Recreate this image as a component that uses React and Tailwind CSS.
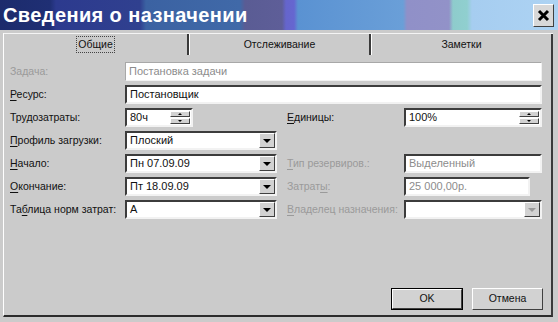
import React from 'react';

const sunken = 'border-2 border-t-[#3c3c3c] border-l-[#3c3c3c] border-b-[#f2f2f2] border-r-[#f2f2f2]';
const raised = 'border border-t-[#ffffff] border-l-[#ffffff] border-b-[#404040] border-r-[#404040] bg-[#d2d2d2]';

function Label({ children, disabled, w = 'w-[115px]' }) {
  return (
    <div className={`${w} shrink-0 text-[10.5px] ${disabled ? 'text-[#9a9a9a]' : 'text-[#111]'}`}>
      {children}
    </div>
  );
}

function U({ children }) {
  return <span className="underline underline-offset-2">{children}</span>;
}

function Input({ w, value, disabled, soft, spin, select }) {
  return (
    <div
      className={`${w} h-[19px] flex items-stretch bg-white ${
        soft ? 'border border-[#a8a8a8] border-b-[#f0f0f0] border-r-[#f0f0f0]' : sunken
      }`}
    >
      <div className={`flex-1 flex items-center pl-[3px] text-[11px] ${disabled ? 'text-[#8c8c8c]' : 'text-[#111]'}`}>
        {value}
      </div>
      {spin && (
        <div className="w-[21px] flex flex-col gap-px py-px pr-px">
          <div className={`${raised} flex-1 flex items-center justify-center`}>
            <div className="w-0 h-0 border-x-[2px] border-x-transparent border-b-[2px] border-b-black" />
          </div>
          <div className={`${raised} flex-1 flex items-center justify-center`}>
            <div className="w-0 h-0 border-x-[2px] border-x-transparent border-t-[2px] border-t-black" />
          </div>
        </div>
      )}
      {select && (
        <div className={`${raised} w-[16px] flex items-center justify-center`}>
          <div
            className={`w-0 h-0 border-x-[4px] border-x-transparent border-t-[4px] ${
              disabled ? 'border-t-[#9a9a9a]' : 'border-t-black'
            }`}
          />
        </div>
      )}
    </div>
  );
}

function Row({ children }) {
  return <div className="flex items-center h-[19px]">{children}</div>;
}

export default function App() {
  return (
    <div
      className="w-[558px] h-[322px] bg-[#cbcbcb] flex flex-col overflow-hidden"
      style={{ fontFamily: '"Liberation Sans", Arial, sans-serif' }}
    >
      <div className="h-[30px] shrink-0 flex items-center pl-[3px] pr-[4px] bg-[linear-gradient(90deg,#1c2b6c_0px,#1f2f74_50px,#2c3a8e_56px,#30408f_140px,#3b62a2_146px,#4069a8_240px,#5a5c94_245px,#5e5e98_282px,#6565cc_286px,#6666d0_294px,#5a92d2_298px,#6a9fd8_403px,#9090c8_407px,#9292c8_449px,#8ecccc_453px,#90cfcf_467px,#a6cdf0_472px,#add3f3_100%)]">
        <div className="text-[20px] font-bold text-white leading-none tracking-[0.4px]">Сведения о назначении</div>
        <div className={`ml-auto w-[21px] h-[23px] flex items-center justify-center ${raised} bg-[#d8d8d8]`}>
          <svg width="13" height="13" viewBox="0 0 13 13">
            <path d="M2 2 L11 11 M11 2 L2 11" stroke="#000" strokeWidth="3" />
          </svg>
        </div>
      </div>

      <div className="flex-1 flex flex-col px-[3px] pt-[3px] pb-[5px]">
        <div className="h-[22px] flex shrink-0 border-t border-t-[#f4f4f4] border-l border-l-white w-[550px]">
          <div className="w-[185px] flex items-center justify-center border-r-2 border-r-[#3a3a3a]">
            <span className="text-[10.5px] text-[#111] px-px border border-dotted border-[#444]">Общие</span>
          </div>
          <div className="w-[182px] flex items-center justify-center border-r-2 border-r-[#3a3a3a] border-l border-l-white">
            <span className="text-[10.5px] text-[#111]">Отслеживание</span>
          </div>
          <div className="flex-1 flex items-center justify-center border-r-2 border-r-[#3a3a3a] border-l border-l-white">
            <span className="text-[10.5px] text-[#111]">Заметки</span>
          </div>
        </div>

        <div className="flex-1 w-[550px] flex flex-col border-l border-l-white border-r-2 border-r-[#3a3a3a] border-b-2 border-b-[#2c2c2c] pl-[6px] pt-[7px] pb-[5px] gap-[4px]">
          <Row>
            <Label disabled>Задача:</Label>
            <Input w="w-[417px]" value="Постановка задачи" disabled soft />
          </Row>
          <Row>
            <Label><U>Р</U>есурс:</Label>
            <Input w="w-[417px]" value="Постановщик" />
          </Row>
          <Row>
            <Label>Трудозатраты:</Label>
            <div className="w-[162px] shrink-0">
              <Input w="w-[68px]" value="80ч" spin />
            </div>
            <Label w="w-[117px]"><U>Е</U>диницы:</Label>
            <Input w="w-[138px]" value="100%" spin />
          </Row>
          <Row>
            <Label><U>П</U>рофиль загрузки:</Label>
            <Input w="w-[152px]" value="Плоский" select />
          </Row>
          <Row>
            <Label><U>Н</U>ачало:</Label>
            <div className="w-[162px] shrink-0">
              <Input w="w-[152px]" value="Пн 07.09.09" select />
            </div>
            <Label w="w-[117px]" disabled><U>Т</U>ип резервиров.:</Label>
            <Input w="w-[138px]" value="Выделенный" disabled />
          </Row>
          <Row>
            <Label><U>О</U>кончание:</Label>
            <div className="w-[162px] shrink-0">
              <Input w="w-[152px]" value="Пт 18.09.09" select />
            </div>
            <Label w="w-[117px]" disabled>Затрат<U>ы</U>:</Label>
            <Input w="w-[126px]" value="25 000,00р." disabled />
          </Row>
          <Row>
            <Label>Та<U>б</U>лица норм затрат:</Label>
            <div className="w-[162px] shrink-0">
              <Input w="w-[152px]" value="А" select />
            </div>
            <Label w="w-[117px]" disabled><U>В</U>ладелец назначения:</Label>
            <Input w="w-[138px]" value="" disabled select />
          </Row>

          <div className="mt-auto flex justify-end gap-[9px] pr-[8px]">
            <div className="w-[72px] h-[22px] border border-black">
              <div className={`${raised} w-full h-full flex items-center justify-center text-[10.5px] text-[#111]`}>OK</div>
            </div>
            <div className={`${raised} w-[71px] h-[22px] flex items-center justify-center text-[10.5px] text-[#111]`}>Отмена</div>
          </div>
        </div>
      </div>
    </div>
  );
}
